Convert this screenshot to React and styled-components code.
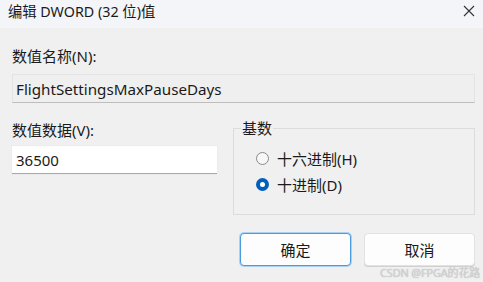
import React from "react";
import styled, { createGlobalStyle } from "styled-components";

const Global = createGlobalStyle`
  html, body { margin: 0; padding: 0; background: #f0f0f0; }
  body { font-family: "Segoe UI", "Noto Sans", "Noto Sans CJK SC", sans-serif; }
`;

const Window = styled.div`
  width: 483px;
  height: 282px;
  display: flex;
  flex-direction: column;
  background: #f0f0f0;
  position: relative;
  overflow: hidden;
  color: #1a1a1a;
`;

const TitleBar = styled.div`
  height: 28px;
  display: flex;
  align-items: center;
  justify-content: space-between;
  padding: 0 8px 0 8px;
  background: #f3f5f8;
  flex-shrink: 0;
`;

const Title = styled.span`
  font-size: 14.3px;
  line-height: 20px;
  margin-top: -4px;
`;

const CloseIcon = styled.svg`
  width: 12px;
  height: 12px;
  margin-top: -6px;
`;

const Body = styled.div`
  display: flex;
  flex-direction: column;
  padding: 19px 8px 0 12px;
`;

const Label = styled.div`
  font-size: 15px;
  line-height: 18px;
  height: 18px;
`;

const NameField = styled.div`
  margin-top: 9px;
  height: 29px;
  box-sizing: border-box;
  border: 1px solid #e3e3e3;
  border-bottom: 1px solid #bdbdbd;
  background: #efefef;
  display: flex;
  align-items: center;
  padding-left: 3px;
  font-size: 15.2px;
`;

const Lower = styled.div`
  display: grid;
  grid-template-columns: 205px 242px;
  column-gap: 16px;
  margin-top: 18px;
`;

const Column = styled.div`
  display: flex;
  flex-direction: column;
`;

const ValueField = styled.div`
  margin-top: 7px;
  height: 28px;
  box-sizing: border-box;
  background: #ffffff;
  border-bottom: 1px solid #a8a8a8;
  box-shadow: 0 0 0 1px #ececec;
  display: flex;
  align-items: center;
  padding-left: 4px;
  font-size: 15px;
`;

const Group = styled.fieldset`
  margin: -2px 0 0 0;
  padding: 11px 0 0 22px;
  border: 1px solid #dcdcdc;
  height: 96px;
  box-sizing: border-box;
  display: flex;
  flex-direction: column;
  gap: 6px;
`;

const Legend = styled.legend`
  font-size: 15px;
  padding: 0 1px;
  margin-left: -15px;
  line-height: 18px;
`;

const RadioRow = styled.div`
  display: flex;
  align-items: center;
  gap: 8px;
  height: 20px;
  font-size: 15px;
`;

const RadioDot = styled.span`
  width: 13px;
  height: 13px;
  box-sizing: border-box;
  border-radius: 50%;
  border: ${(p) => (p.$checked ? "4px solid #005fb8" : "1px solid #8a8a8a")};
  background: ${(p) => (p.$checked ? "#ffffff" : "#f7f7f7")};
  flex-shrink: 0;
`;

const Buttons = styled.div`
  display: flex;
  justify-content: flex-end;
  gap: 13px;
  margin-top: 18px;
`;

const Button = styled.button`
  width: 111px;
  height: 33px;
  box-sizing: border-box;
  border-radius: 4px;
  background: #fdfdfd;
  border: 1px solid ${(p) => (p.$primary ? "#4a9be0" : "#e2e2e2")};
  box-shadow: ${(p) => (p.$primary ? "0 0 0 1px #a9d1f3" : "0 1px 0 #d0d0d0")};
  font-family: inherit;
  font-size: 15px;
  color: #1a1a1a;
  padding: 0;
`;

const Watermark = styled.div`
  position: absolute;
  right: 3px;
  bottom: 2px;
  font-size: 11px;
  color: #d2d2d2;
  text-shadow: 0 0 1px #b8b8b8;
  letter-spacing: -0.2px;
`;

export default function App() {
  return (
    <Window>
      <Global />
      <TitleBar>
        <Title>编辑 DWORD (32 位)值</Title>
        <CloseIcon viewBox="0 0 12 12">
          <path d="M1 1 L11 11 M11 1 L1 11" stroke="#333" strokeWidth="1.1" fill="none" />
        </CloseIcon>
      </TitleBar>
      <Body>
        <Label>数值名称(N):</Label>
        <NameField>FlightSettingsMaxPauseDays</NameField>
        <Lower>
          <Column>
            <Label>数值数据(V):</Label>
            <ValueField>36500</ValueField>
          </Column>
          <Group>
            <Legend>基数</Legend>
            <RadioRow>
              <RadioDot />
              十六进制(H)
            </RadioRow>
            <RadioRow>
              <RadioDot $checked />
              十进制(D)
            </RadioRow>
          </Group>
        </Lower>
        <Buttons>
          <Button $primary>确定</Button>
          <Button>取消</Button>
        </Buttons>
      </Body>
      <Watermark>CSDN @FPGA的花路</Watermark>
    </Window>
  );
}
